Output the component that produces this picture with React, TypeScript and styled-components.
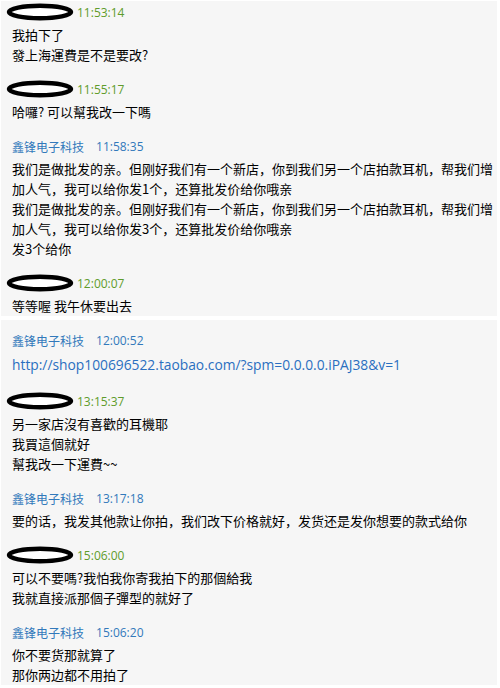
import React from 'react';
import styled, { createGlobalStyle } from 'styled-components';

const colors = {
  panel: '#f6f6f6',
  text: '#000000',
  shop: '#3279bb',
  buyer: '#5f9c2b',
  link: '#2a6fc0',
};

const GlobalStyle = createGlobalStyle`
  html, body {
    margin: 0;
    padding: 0;
    background: #ffffff;
  }
  body {
    font-family: "Noto Sans CJK SC", "Noto Sans", sans-serif;
  }
`;

const Page = styled.div`
  display: flex;
  flex-direction: column;
  gap: 4px;
  width: 496px;
  padding: 1px 0 0 1px;
`;

const Panel = styled.div<{ $top: number }>`
  display: flex;
  flex-direction: column;
  gap: 14px;
  background-color: ${colors.panel};
  padding: ${p => p.$top}px 2px 0 11px;
`;

const Message = styled.div`
  display: flex;
  flex-direction: column;
`;

const Header = styled.div`
  display: flex;
  align-items: center;
  height: 20px;
  margin-bottom: 3px;
`;

const Name = styled.span`
  font-size: 12px;
  color: ${colors.shop};
  margin-right: 12px;
`;

const Time = styled.span<{ $buyer: boolean }>`
  font-family: "Open Sans", "Noto Sans", sans-serif;
  font-size: 12px;
  color: ${p => (p.$buyer ? colors.buyer : colors.shop)};
`;

const Redacted = styled.svg`
  display: block;
  margin-left: -6px;
  margin-right: 1px;
`;

const Line = styled.div`
  font-size: 13px;
  line-height: 20px;
  color: ${colors.text};
  white-space: pre-wrap;
`;

const Link = styled.div`
  font-family: "Open Sans", "Noto Sans", sans-serif;
  font-size: 13.8px;
  line-height: 24px;
  color: ${colors.link};
`;

type Msg = {
  buyer: boolean;
  time: string;
  lines: string[];
  link?: boolean;
};

const SHOP = '鑫锋电子科技';

const first: Msg[] = [
  { buyer: true, time: '11:53:14', lines: ['我拍下了', '發上海運費是不是要改?'] },
  { buyer: true, time: '11:55:17', lines: ['哈囉? 可以幫我改一下嗎'] },
  {
    buyer: false,
    time: '11:58:35',
    lines: [
      '我们是做批发的亲。但刚好我们有一个新店，你到我们另一个店拍款耳机，帮我们增加人气，我可以给你发1个，还算批发价给你哦亲',
      '我们是做批发的亲。但刚好我们有一个新店，你到我们另一个店拍款耳机，帮我们增加人气，我可以给你发3个，还算批发价给你哦亲',
      '发3个给你',
    ],
  },
  { buyer: true, time: '12:00:07', lines: ['等等喔 我午休要出去'] },
];

const second: Msg[] = [
  {
    buyer: false,
    time: '12:00:52',
    lines: ['http://shop100696522.taobao.com/?spm=0.0.0.0.iPAJ38&v=1'],
    link: true,
  },
  { buyer: true, time: '13:15:37', lines: ['另一家店沒有喜歡的耳機耶', '我買這個就好', '幫我改一下運費~~'] },
  { buyer: false, time: '13:17:18', lines: ['要的话，我发其他款让你拍，我们改下价格就好，发货还是发你想要的款式给你'] },
  { buyer: true, time: '15:06:00', lines: ['可以不要嗎?我怕我你寄我拍下的那個給我', '我就直接派那個子彈型的就好了'] },
  { buyer: false, time: '15:06:20', lines: ['你不要货那就算了', '那你两边都不用拍了'] },
];

function Oval(): JSX.Element {
  return (
    <Redacted width="70" height="18" viewBox="0 0 70 18">
      <ellipse cx="34" cy="9" rx="31" ry="6.2" fill="#ffffff" stroke="#000000" strokeWidth="4.5" />
    </Redacted>
  );
}

function MessageBlock({ msg }: { msg: Msg }): JSX.Element {
  return (
    <Message>
      <Header>
        {msg.buyer ? <Oval /> : <Name>{SHOP}</Name>}
        <Time $buyer={msg.buyer}>{msg.time}</Time>
      </Header>
      {msg.lines.map(line => (msg.link ? <Link key={line}>{line}</Link> : <Line key={line}>{line}</Line>))}
    </Message>
  );
}

function App(): JSX.Element {
  return (
    <>
      <GlobalStyle />
      <Page>
        <Panel $top={1}>
          {first.map(m => (
            <MessageBlock key={m.time} msg={m} />
          ))}
        </Panel>
        <Panel $top={10}>
          {second.map(m => (
            <MessageBlock key={m.time} msg={m} />
          ))}
        </Panel>
      </Page>
    </>
  );
}

export default App;
